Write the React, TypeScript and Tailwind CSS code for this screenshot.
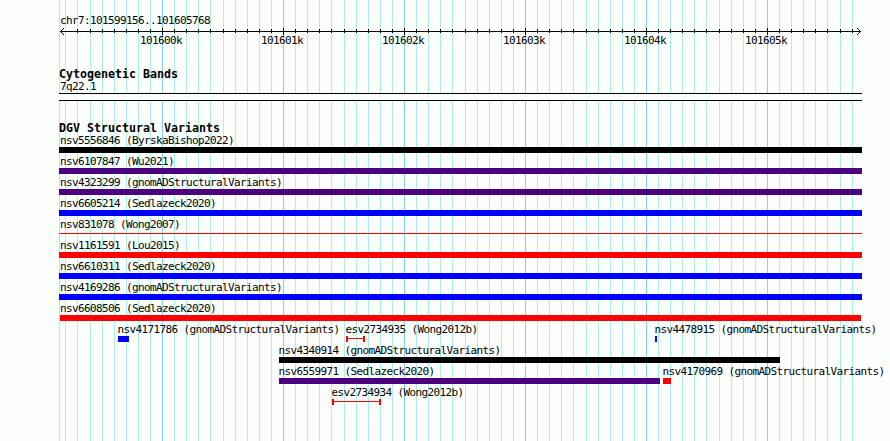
import type { ReactNode } from 'react'

type Glyph = 'bar' | 'range' | 'line'

type Feature = {
  name: string
  source: string
  start: number
  end: number
  color: string
  glyph?: Glyph
}

const LEFT = 59

const majorLines = [162, 283, 404, 525, 646, 767]
const minorLines = [
  65, 77, 90, 102, 114, 126, 138, 150, 174, 186, 198, 210, 223, 235, 247, 259, 271,
  295, 307, 319, 331, 344, 356, 368, 380, 392, 416, 428, 440, 452, 465, 477, 489, 501, 513,
  537, 549, 561, 573, 586, 598, 610, 622, 634, 658, 670, 682, 694, 706, 719, 731, 743, 755,
  779, 791, 803, 815, 827, 840, 852,
]

const black = 'bg-black'
const indigo = 'bg-[#4b0082]'
const blue = 'bg-[#0000ff]'
const red = 'bg-[#ff0000]'

const rows: Feature[][] = [
  [{ name: 'nsv5556846', source: 'ByrskaBishop2022', start: 59, end: 862, color: black }],
  [{ name: 'nsv6107847', source: 'Wu2021', start: 59, end: 862, color: indigo }],
  [{ name: 'nsv4323299', source: 'gnomADStructuralVariants', start: 59, end: 862, color: indigo }],
  [{ name: 'nsv6605214', source: 'Sedlazeck2020', start: 59, end: 862, color: blue }],
  [{ name: 'nsv831078', source: 'Wong2007', start: 59, end: 862, color: red, glyph: 'line' }],
  [{ name: 'nsv1161591', source: 'Lou2015', start: 59, end: 862, color: red }],
  [{ name: 'nsv6610311', source: 'Sedlazeck2020', start: 59, end: 862, color: blue }],
  [{ name: 'nsv4169286', source: 'gnomADStructuralVariants', start: 59, end: 862, color: blue }],
  [{ name: 'nsv6608506', source: 'Sedlazeck2020', start: 60, end: 861, color: red }],
  [
    { name: 'nsv4171786', source: 'gnomADStructuralVariants', start: 118, end: 129, color: blue },
    { name: 'esv2734935', source: 'Wong2012b', start: 346, end: 365, color: red, glyph: 'range' },
    { name: 'nsv4478915', source: 'gnomADStructuralVariants', start: 655, end: 657, color: blue },
  ],
  [{ name: 'nsv4340914', source: 'gnomADStructuralVariants', start: 279, end: 780, color: black }],
  [
    { name: 'nsv6559971', source: 'Sedlazeck2020', start: 279, end: 660, color: indigo },
    { name: 'nsv4170969', source: 'gnomADStructuralVariants', start: 663, end: 671, color: red },
  ],
  [{ name: 'esv2734934', source: 'Wong2012b', start: 332, end: 381, color: red, glyph: 'range' }],
]

function Label({ children }: { children: ReactNode }) {
  return (
    <span className="block h-3 text-[11px] leading-3 tracking-[-0.622px] whitespace-pre">{children}</span>
  )
}

function Title({ children }: { children: ReactNode }) {
  return (
    <h2 className="h-[13px] pl-[59px] text-[11.63px] leading-[13px] font-bold whitespace-pre">{children}</h2>
  )
}

function GridLines() {
  return (
    <svg className="absolute inset-0" width="890" height="441" shapeRendering="crispEdges">
      <rect x={LEFT} width="1" height="441" fill="#afeeee" />
      {minorLines.map((x) => (
        <rect key={x} x={x} width="1" height="441" fill="#afeeee" />
      ))}
      {majorLines.map((x) => (
        <rect key={x} x={x} width="1" height="441" fill="#87ceeb" />
      ))}
    </svg>
  )
}

function Ruler() {
  return (
    <svg className="block" width="890" height="8" shapeRendering="crispEdges">
      <rect x="60" y="4" width="801" height="1" />
      {/* arrow heads */}
      {[1, 2, 3].map((d) => (
        <g key={d}>
          <rect x={60 + d} y={4 - d} width="1" height="1" />
          <rect x={60 + d} y={4 + d} width="1" height="1" />
          <rect x={860 - d} y={4 - d} width="1" height="1" />
          <rect x={860 - d} y={4 + d} width="1" height="1" />
        </g>
      ))}
      {minorLines.filter((x) => x > 70).map((x) => (
        <rect key={x} x={x} y="2" width="1" height="4" />
      ))}
      {majorLines.map((x) => (
        <rect key={x} x={x} y="1" width="1" height="7" />
      ))}
    </svg>
  )
}

function Shape({ color, glyph = 'bar', width }: { color: string; glyph?: Glyph; width: number }) {
  if (glyph === 'line') {
    return <div className={`mt-[2px] mb-[3px] h-px ${color}`} style={{ width }} />
  }
  if (glyph === 'range') {
    return (
      <div className="flex h-1.5 items-stretch" style={{ width }}>
        <div className={`w-[2px] ${color}`} />
        <div className={`mt-[2px] h-px grow ${color}`} />
        <div className={`w-[2px] ${color}`} />
      </div>
    )
  }
  return <div className={`h-1.5 ${color}`} style={{ width }} />
}

function Row({ features }: { features: Feature[] }) {
  return (
    <div className="flex h-[21px]">
      {features.map((f, i) => {
        const next = features[i + 1]
        // each feature takes the room up to the start of the next one
        const from = i === 0 ? 0 : f.start
        const to = next ? next.start : 890
        // labels sit just left of their shape, but never left of the panel
        const shift = Math.max(LEFT + 1 - f.start, -0.6)
        return (
          <div key={f.name} className="shrink-0" style={{ width: to - from, paddingLeft: f.start - from }}>
            <div style={{ marginLeft: shift }}>
              <Label>{`${f.name} (${f.source})`}</Label>
            </div>
            <Shape color={f.color} glyph={f.glyph} width={f.end - f.start} />
          </div>
        )
      })}
    </div>
  )
}

export default function App() {
  return (
    <div className="relative h-[441px] w-[890px] overflow-hidden bg-[#fdfffc] font-['DejaVu_Sans_Mono',monospace] text-black">
      <GridLines />
      <div className="relative pt-[15px]">
        <div className="pl-[60px]">
          <Label>chr7:101599156..101605768</Label>
        </div>
        <Ruler />
        <div className="flex pl-[102px]">
          {majorLines.map((x, i) => (
            <div key={x} className="w-[121px] shrink-0 pl-[38px]">
              <Label>{`${101600 + i}k`}</Label>
            </div>
          ))}
        </div>

        <div className="pt-[21px]">
          <Title>Cytogenetic Bands</Title>
          <div className="pl-[60px]">
            <Label>7q22.1</Label>
          </div>
          <div className="ml-[59px] h-2 w-[803px] border-y border-black bg-[#fdfffc]" />
        </div>

        <div className="pt-[21px]">
          <Title>DGV Structural Variants</Title>
          {rows.map((features) => (
            <Row key={features[0].name} features={features} />
          ))}
        </div>
      </div>
    </div>
  )
}
